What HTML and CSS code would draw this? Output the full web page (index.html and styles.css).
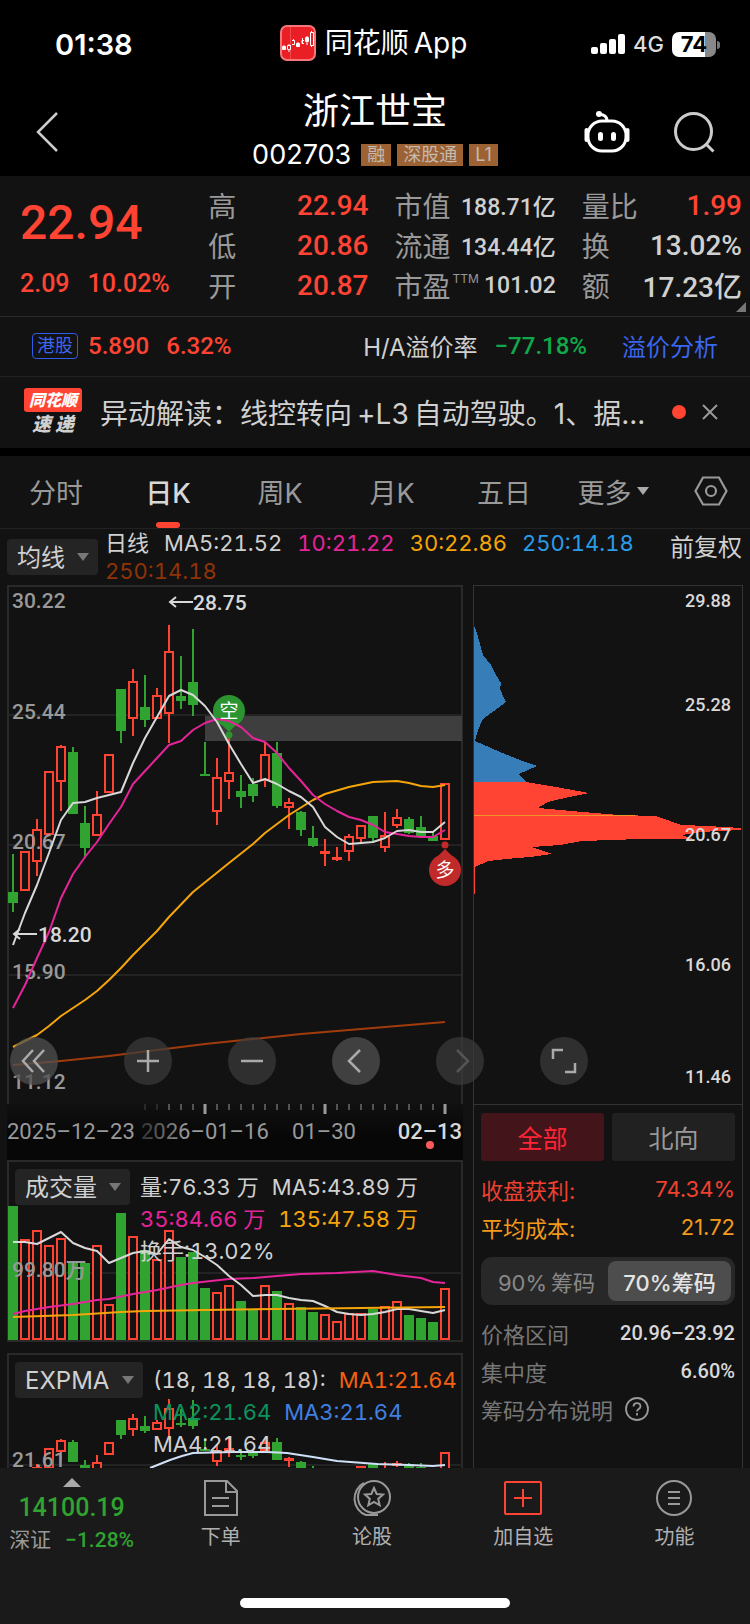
FILE: index.html
```
<!DOCTYPE html>
<html lang="zh-CN">
<head>
<meta charset="utf-8">
<meta name="viewport" content="width=device-width, initial-scale=1">
<title>浙江世宝 002703</title>
<link rel="stylesheet" href="styles.css">
</head>
<body>
<div class="app">
  <div class="status">
    <span class="clock">01:38</span>
    <span class="island">
      <svg class="app-icon" viewBox="0 0 36 36" aria-hidden="true">
        <rect x="1" y="1" width="34" height="34" rx="6" fill="#e91f25" stroke="#f4787a" stroke-width="2"/>
        <path d="M10.500 2v32" stroke="#f0484c" stroke-width="1"/>
        <g stroke="#fff" stroke-width="1" fill="none">
          <path d="M4 20v5M9 19v1M9 25v2M13.500 14v1M18 17v3M22.500 13v5M27 11v9M31.500 6v2M31.500 20v2"/>
          <path d="M2.500 21.500h3v3h-3z M16.500 18.500h3v3h-3z M25.500 12.500h3v4h-3z" fill="#fff"/>
          <path d="M7.500 20.500h3v4h-3z M12 15.500h2.500v4H12 M24 15.500h-2v3h2 M30.500 7.500h3v13h-3z"/>
        </g>
      </svg>
      <span>同花顺&#8201;App</span>
    </span>
    <span class="signals">
      <svg class="bars" viewBox="0 0 34 22" aria-hidden="true" fill="#fff">
        <rect x="0" y="14" width="7" height="7" rx="2"/><rect x="9" y="10" width="7" height="11" rx="2"/>
        <rect x="18" y="6" width="7" height="15" rx="2"/><rect x="27" y="1" width="7" height="20" rx="2"/>
      </svg>
      <span class="net">4G</span>
      <span class="battery"><b>74</b></span>
    </span>
  </div>

  <header class="header">
    <button class="icon-btn back" aria-label="返回">
      <svg width="24" height="42" viewBox="0 0 24 42" fill="none" stroke="#ccc" stroke-width="2.500"><path d="M22 2 3 21 22 40"/></svg>
    </button>
    <div class="heading">
      <h1>浙江世宝</h1>
      <div class="code"><span>002703</span><i class="tag">融</i><i class="tag">深股通</i><i class="tag">L1</i></div>
    </div>
    <div class="actions">
      <button class="icon-btn" aria-label="智能助手">
        <svg width="48" height="44" viewBox="0 0 48 44" fill="none" stroke="#fff" stroke-width="3">
          <rect x="5" y="11" width="38" height="30" rx="14"/>
          <path d="M3.500 20v10M44.500 20v10" stroke-width="4" stroke-linecap="round"/>
          <path d="M24 11c0-5-3-6-8-7"/><circle cx="16" cy="4" r="3" fill="#fff" stroke="none"/>
          <path d="M17.500 24.500v4M30.500 24.500v4" stroke-width="5" stroke-linecap="round"/>
        </svg>
      </button>
      <button class="icon-btn" aria-label="搜索">
        <svg width="42" height="42" viewBox="0 0 42 42" fill="none" stroke="#ccc" stroke-width="3"><circle cx="20.500" cy="20.500" r="18"/><path d="m32.500 32.500 8 8"/></svg>
      </button>
    </div>
  </header>

  <section class="quote">
    <div class="price">
      <strong>22.94</strong>
      <div class="delta"><span>2.09</span><span>10.02%</span></div>
    </div>
    <dl class="stats">
      <div><dt>高</dt><dd class="up">22.94</dd></div>
      <div><dt>低</dt><dd class="up">20.86</dd></div>
      <div><dt>开</dt><dd class="up">20.87</dd></div>
    </dl>
    <dl class="stats small">
      <div><dt>市值</dt><dd>188.71亿</dd></div>
      <div><dt>流通</dt><dd>134.44亿</dd></div>
      <div><dt>市盈<sup>TTM</sup></dt><dd>101.02</dd></div>
    </dl>
    <dl class="stats">
      <div><dt>量比</dt><dd class="up">1.99</dd></div>
      <div><dt>换</dt><dd>13.02%</dd></div>
      <div><dt>额</dt><dd>17.23亿</dd></div>
    </dl>
    <i class="corner"></i>
  </section>

  <section class="hk">
    <span class="hk-tag">港股</span>
    <span class="num up">5.890</span>
    <span class="num up">6.32%</span>
    <span class="ratio">H/A溢价率</span>
    <span class="num down">−77.18%</span>
    <a href="#premium">溢价分析</a>
  </section>

  <section class="news">
    <span class="news-logo"><b>同花顺</b><em>速 递</em></span>
    <a href="#news">异动解读：线控转向&#8201;+L3&#8201;自动驾驶。1、据...</a>
    <i class="dot"></i>
    <button class="icon-btn" aria-label="关闭">
      <svg width="18" height="18" viewBox="0 0 18 18" stroke="#999" stroke-width="2"><path d="m2 2 14 14M16 2 2 16"/></svg>
    </button>
  </section>

  <nav class="tabs">
    <button>分时</button>
    <button class="on">日K</button>
    <button>周K</button>
    <button>月K</button>
    <button>五日</button>
    <button class="more">更多</button>
    <button aria-label="设置">
      <svg width="34" height="30" viewBox="0 0 34 30" fill="none" stroke="#999" stroke-width="2.200"><path d="M9 1.500h16L32.500 15 25 28.500H9L1.500 15z"/><circle cx="17" cy="15" r="5"/></svg>
    </button>
  </nav>

  <div class="ma">
    <label class="pick"><select aria-label="主图指标"><option>均线</option></select></label>
    <div class="legend">
      <span>日线</span><span>MA5:21.52</span><span class="pink">10:21.22</span><span class="gold">30:22.86</span><span class="sky">250:14.18</span><span class="rust">250:14.18</span>
    </div>
    <span class="adjust">前复权</span>
  </div>

  <main class="board">
    <div class="left">
      <div class="kline">
        <svg id="kline" class="plot" viewBox="7 585 456 519" role="img" aria-label="日K线图">
          <g class="grid"><path d="M8 715H462M8 845H462M8 975H462"/></g>
          <g class="frame"><path d="M8 1104V586H462V1104"/></g>
          <rect x="205" y="716" width="257" height="25" fill="#3e3e3e"/>
          <g id="candles"></g>
          <g class="axis"><text x="12" y="608">30.22</text><text x="12" y="719">25.44</text><text x="12" y="849">20.67</text><text x="12" y="979">15.90</text><text x="12" y="1089">11.12</text></g>
          <path class="line" stroke="#a03c0c" d="M13 1065 61 1061 109 1056 157 1050 205 1044 253 1039 301 1034 373 1028 445 1022"/>
          <path class="line" stroke="#f5a50a" d="M13 1047 37 1035 49 1026 61 1016 73 1008 85 1000 97 991 109 980 121 968 133 955 145 943 157 931 169 917 193 892 229 863 253 844 265 833 289 815 313 800 325 794 349 787 373 782 397 781 409 783 421 786 433 787 445 785"/>
          <g fill="#2b932f"><circle cx="229" cy="711" r="16"/><path d="M219 722h20l-10 10z"/><circle cx="229" cy="735" r="3.500"/></g>
          <g fill="#c12a2a"><circle cx="445" cy="870" r="16"/><path d="M436 858h18l-9-9z"/><circle cx="445" cy="845" r="3.500"/></g>
          <path class="line" stroke="#e6249a" d="M13 1008 25 985 37 958 49 932 61 898 73 874 85 857 97 842 109 824 121 807 133 784 145 771 157 758 169 745 181 741 193 730 205 723 217 719 229 721 241 727 253 738 265 742 277 753 289 768 301 781 313 795 325 804 337 811 349 817 361 820 373 825 385 832 397 834 409 836 421 837 433 837 445 830"/>
          <path class="line" stroke="#d8d8d8" d="M13 945 25 913 37 885 49 853 61 820 73 803 85 802 97 798 109 795 121 792 133 763 145 738 157 717 169 696 181 690 193 695 205 706 217 722 229 744 241 764 253 783 265 779 277 784 289 791 301 797 313 807 325 827 337 837 349 844 361 843 373 842 385 838 397 831 409 830 421 832 433 832 445 822"/>
          <g class="badge"><text x="229" y="718">空</text><text x="445" y="877">多</text></g>
          <g class="peak"><path d="M193 602H171M176 597l-6 5 6 5M37 934H15M20 929l-6 5 6 5"/><text x="193" y="610">28.75</text><text x="38" y="942">18.20</text></g>
        </svg>
        <div class="controls">
          <button class="lit first" aria-label="最早"><svg viewBox="0 0 48 48"><path d="M34 13 24 24 34 35M23 13 13 24 23 35"/></svg></button>
          <button aria-label="放大"><svg viewBox="0 0 48 48"><path d="M24 13V35M13 24H35"/></svg></button>
          <button aria-label="缩小"><svg viewBox="0 0 48 48"><path d="M13 24H35"/></svg></button>
          <button class="lit" aria-label="向左"><svg viewBox="0 0 48 48"><path d="M28 13 17 24 28 35"/></svg></button>
          <button class="dim" aria-label="向右"><svg viewBox="0 0 48 48"><path d="M21 13 32 24 21 35"/></svg></button>
          <button aria-label="全屏"><svg viewBox="0 0 48 48"><path d="M13 22V13H23M35 26V35H25"/></svg></button>
        </div>
      </div>

      <svg class="plot timeline" viewBox="7 1104 456 56" role="img" aria-label="日期轴">
        <defs><linearGradient id="fade"><stop offset="0" stop-color="#333"/><stop offset=".35" stop-color="#999"/></linearGradient></defs>
        <g id="ticks"></g>
        <g class="dates"><text x="7" y="1139">2025–12–23</text><text x="141" y="1139" fill="url(#fade)">2026–01–16</text><text x="324" y="1139" text-anchor="middle">01–30</text><text x="462" y="1139" text-anchor="end" class="now">02–13</text></g>
        <circle cx="430" cy="1145" r="4" fill="#ff5a5a"/>
      </svg>

      <section class="panel volume">
        <svg class="plot" viewBox="7 1160 456 182" role="img" aria-label="成交量图">
          <g class="grid"><path d="M8 1273H462"/></g>
          <g id="volumes"></g>
          <g class="axis"><text x="12" y="1277">99.80万</text></g>
          <path id="vol-ma35" class="line" stroke="#e6249a"/>
          <path id="vol-ma5" class="line" stroke="#d8d8d8"/>
          <path id="vol-ma135" class="line" stroke="#f5a50a"/>
        </svg>
        <div class="panel-head">
          <label class="pick"><select aria-label="副图指标一"><option>成交量</option></select></label>
          <div class="legend"><span>量:76.33 万</span><span>MA5:43.89 万</span><span class="pink">35:84.66 万</span><span class="gold">135:47.58 万</span><span>换手:13.02%</span></div>
        </div>
      </section>

      <section class="panel expma">
        <svg class="plot" viewBox="7 1353 456 115" role="img" aria-label="EXPMA图">
          <g class="grid"><path d="M8 1465H462"/></g>
          <g id="mini"></g>
          <g class="axis"><text x="12" y="1467">21.61</text></g>
          <path class="line" stroke="#cfe0f7" d="M150 1468 170 1460 182 1456 193 1453 233 1452 267 1452 287 1453 313 1457 337 1461 377 1464 409 1465 433 1466 445 1465"/>
        </svg>
        <div class="panel-head">
          <label class="pick"><select aria-label="副图指标二"><option>EXPMA</option></select></label>
          <div class="legend"><span>(18, 18, 18, 18):</span><span class="orange">MA1:21.64</span><span class="jade">MA2:21.64</span><span class="blue">MA3:21.64</span><span>MA4:21.64</span></div>
        </div>
      </section>
    </div>

    <aside class="chips">
      <svg class="plot" viewBox="473 585 270 519" role="img" aria-label="筹码分布图">
        <g shape-rendering="crispEdges">
          <path fill="#377db8" d="M474 627 475 627 477 633 483 655 491 665 496 675 501 683 500 689 505 700 506 702 498 708 483 719 478 730 475 741 482 744 500 752 520 760 537 766 519 774 522 778 526 782 474 782z"/>
          <path fill="#ff4433" d="M474 782 526 782 556 787 589 793 569 797 548 802 538 808 571 811 619 815 656 816 670 821 681 825 708 826 741 828 741 830 700 832 682 835 693 839 640 839 582 841 560 845 532 847 546 852 552 854 530 857 506 859 488 861 475 867 475 894 474 894z"/>
          <path fill="#f0942a" d="M474 815h161v1h-161z"/>
        </g>
        <g class="levels"><text x="731" y="607">29.88</text><text x="731" y="711">25.28</text><text x="731" y="841">20.67</text><text x="731" y="971">16.06</text><text x="731" y="1083">11.46</text></g>
      </svg>
      <div class="chip-body">
        <div class="pair"><button class="on">全部</button><button>北向</button></div>
        <div class="row red"><span>收盘获利:</span><span>74.34%</span></div>
        <div class="row amber"><span>平均成本:</span><span>21.72</span></div>
        <div class="segment"><button>90%&#8201;筹码</button><button class="on">70%筹码</button></div>
        <div class="row"><span>价格区间</span><b>20.96–23.92</b></div>
        <div class="row"><span>集中度</span><b>6.60%</b></div>
        <div class="row help"><span>筹码分布说明</span>
          <button class="icon-btn" aria-label="说明"><svg width="24" height="24" viewBox="0 0 24 24" fill="none" stroke="#999" stroke-width="1.800"><circle cx="12" cy="12" r="11"/><path d="M8.500 9.500c0-4.500 7-4.500 7 0 0 2.500-3.500 2.500-3.500 5M12 16v2.500"/></svg></button>
        </div>
      </div>
    </aside>
  </main>

  <footer class="dock">
    <div class="dock-row">
      <a class="index" href="#index"><i></i><strong>14100.19</strong><span><em>深证</em><b>−1.28%</b></span></a>
      <a href="#order"><svg viewBox="0 0 40 40"><path d="M4 3H26L36 13V37H4zM25 3V14H36M11 20H28M11 28H28"/></svg>下单</a>
      <a href="#talk"><svg viewBox="0 0 40 40"><circle cx="22" cy="19" r="16"/><path d="M12 5A17.500 17.500 0 0 0 14 37H26M22 10l2.700 6 6.300.600-4.800 4.300 1.500 6.400-5.700-3.400-5.700 3.400 1.500-6.400-4.800-4.300 6.300-.600z"/></svg>论股</a>
      <a href="#add"><svg viewBox="0 0 40 40" class="hot"><rect x="2" y="4" width="36" height="32" rx="1"/><path d="M20 11V29M11 20H29"/></svg>加自选</a>
      <a href="#menu"><svg viewBox="0 0 40 40"><circle cx="20" cy="20" r="17"/><path d="M14 14H26M14 20H26M14 26H26"/></svg>功能</a>
    </div>
    <div class="home"></div>
  </footer>
</div>
<script src="chart.js"></script>
</body>
</html>
```
FILE: styles.css
```
* { box-sizing: border-box; }
body {
  margin: 0;
  background: #000;
  color: #d0d0d0;
  font-family: Inter, "Noto Sans CJK SC", sans-serif;
  font-size: 22px;
}
button, select { font: inherit; color: inherit; background: none; border: 0; padding: 0; margin: 0; }
a { color: inherit; text-decoration: none; }
i, em { font-style: normal; }
h1, dl, dd { margin: 0; }
svg { display: block; }
.app { min-height: 100vh; display: flex; flex-direction: column; background: #121212; }
.icon-btn { display: flex; }
.up { color: #ff4433; }
.down { color: #0fa84a; }
.pink { color: #e6249a; }
.gold { color: #f5a50a; }
.sky { color: #2a9ce8; }
.rust { color: #8f3208; }
.orange { color: #f26010; }
.jade { color: #0b935e; }
.blue { color: #417fe0; }

/* status bar and title */
.status {
  display: grid;
  grid-template-columns: 1fr auto 1fr;
  align-items: center;
  height: 88px;
  padding: 0 34px 0 35px;
  background: #000;
  color: #fff;
}
.clock { padding-left: 20px; font-size: 29px; font-weight: 600; }
.island { display: flex; align-items: center; gap: 9px; font-size: 28px; line-height: 36px; padding: 0 4px 2px 0; }
.app-icon { width: 36px; height: 36px; }
.signals { display: flex; align-items: center; justify-content: flex-end; gap: 8px; }
.bars { width: 34px; height: 22px; }
.net { font-size: 22px; font-weight: 500; color: #ddd; }
.battery {
  position: relative;
  width: 44px;
  height: 25px;
  border-radius: 7px;
  background: linear-gradient(90deg, #fff 75%, #888 75%);
  color: #000;
  font-size: 22px;
  line-height: 25px;
  text-align: center;
}
.battery::after {
  content: "";
  position: absolute;
  right: -4px;
  top: 9px;
  width: 3px;
  height: 8px;
  border-radius: 0 3px 3px 0;
  background: #777;
}
.header {
  display: grid;
  grid-template-columns: 1fr auto 1fr;
  align-items: center;
  height: 88px;
  padding: 0 35px;
  background: #000;
  color: #fff;
}
.heading { text-align: center; }
h1 { font-size: 36px; font-weight: 400; line-height: 46px; }
.code { display: flex; align-items: center; justify-content: center; gap: 6px; font-size: 27px; line-height: 42px; }
.code span { margin-right: 4px; }
.tag { padding: 0 6px; background: #9c6233; color: #c4bbb2; font-size: 18px; line-height: 22px; }
.actions { display: flex; justify-content: flex-end; align-items: center; gap: 42px; }

/* quote */
.quote {
  position: relative;
  display: grid;
  grid-template-columns: 162fr 160fr 161fr 160fr;
  column-gap: 26px;
  height: 141px;
  padding: 9px 8px 0 20px;
  border-bottom: 1px solid #2a2a2a;
  font-family: Roboto, "Noto Sans CJK SC", sans-serif;
}
.price { color: #ff4433; }
.price strong { display: block; font-size: 48px; font-weight: 500; line-height: 76px; }
.delta { display: flex; gap: 18px; font-size: 25px; font-weight: 500; line-height: 46px; }
.stats div { display: flex; justify-content: space-between; align-items: center; height: 40px; white-space: nowrap; }
.stats dt { color: #999; font-size: 28px; }
.stats dd { font-size: 28px; font-weight: 500; }
.stats.small dd { font-size: 23px; }
.stats sup { font-size: 12px; line-height: 12px; vertical-align: 14px; margin-left: 2px; font-family: Inter, sans-serif; }
.corner {
  position: absolute;
  right: 4px;
  bottom: 4px;
  border-left: 10px solid transparent;
  border-bottom: 10px solid #777;
}
.hk { display: flex; align-items: center; height: 60px; padding: 0 32px 2px; border-bottom: 1px solid #222; }
.hk-tag { padding: 0 4px; border: 1px solid #2f5ce8; border-radius: 4px; color: #3a66f0; font-size: 18px; line-height: 24px; margin-right: 10px; }
.num { font-family: Roboto, sans-serif; font-size: 24px; font-weight: 500; margin-right: 17px; }
.ratio { margin-left: auto; margin-right: 17px; font-size: 24px; }
.hk a { margin-left: 18px; color: #3a66f0; font-size: 24px; }
.news {
  display: flex;
  align-items: center;
  gap: 18px;
  height: 79px;
  padding: 0 31px 1px 24px;
  border-bottom: 8px solid #000;
}
.news a { flex: 1; white-space: nowrap; font-size: 28px; }
.news-logo { width: 58px; font-style: italic; text-align: center; }
.news-logo b {
  display: block;
  border-radius: 3px;
  background: #ff4433;
  color: #fff;
  font-size: 16px;
  font-weight: 900;
  line-height: 24px;
}
.news-logo em { display: block; font-size: 19px; font-weight: 900; font-style: italic; line-height: 25px; }
.dot { width: 14px; height: 14px; border-radius: 50%; background: #ff4433; }
.news .icon-btn { margin-left: -3px; }

/* period tabs */
.tabs {
  display: grid;
  grid-template-columns: repeat(6, 112fr) 78fr;
  height: 73px;
  border-bottom: 1px solid #222;
  color: #999;
  font-size: 27px;
}
.tabs button { position: relative; display: flex; align-items: center; justify-content: center; padding-bottom: 2px; }
.tabs .on { color: #d8d8d8; font-weight: 500; }
.tabs .on::after {
  content: "";
  position: absolute;
  bottom: 0;
  width: 24px;
  height: 6px;
  border-radius: 3px;
  background: #ff4433;
}
.tabs .more { padding-right: 6px; }
.more::after { content: ""; margin-left: 5px; border: 6px solid transparent; border-top: 8px solid #aaa; border-bottom: 0; }

/* indicator legends */
.ma { display: flex; align-items: flex-start; gap: 7px; padding: 0 8px 0 7px; height: 56px; }
.ma .pick { margin-top: 10px; }
.ma .legend { flex: 1; column-gap: 15px; line-height: 28px; }
.adjust { font-size: 24px; line-height: 38px; }
.legend {
  display: flex;
  flex-wrap: wrap;
  column-gap: 13px;
  font-size: 22px;
  font-variant-numeric: tabular-nums;
  line-height: 32px;
  white-space: nowrap;
}
.pick { position: relative; display: block; flex: none; }
.pick select {
  display: block;
  appearance: none;
  height: 36px;
  padding: 0 33px 0 10px;
  border-radius: 4px;
  background: #242424;
  font-size: 24px;
}
.pick::after {
  content: "";
  position: absolute;
  right: 9px;
  top: 14px;
  border: 6px solid transparent;
  border-top: 8px solid #777;
  border-bottom: 0;
  pointer-events: none;
}

/* charts */
.board { flex: 1; display: grid; grid-template-columns: 456fr 270fr; column-gap: 10px; padding: 0 7px; }
.plot { width: 100%; height: auto; font-family: Roboto, "Noto Sans CJK SC", sans-serif; }
.kline { position: relative; }
.grid { stroke: #232323; stroke-width: 2; fill: none; }
.frame { stroke: #2a2a2a; stroke-width: 2; fill: none; }
.axis { fill: #999; font-size: 21px; font-weight: 500; }
.line { fill: none; stroke-width: 2; stroke-linejoin: round; }
.badge { fill: #fff; font-size: 19px; text-anchor: middle; }
.peak text { fill: #d8d8d8; font-size: 21px; font-weight: 500; }
.peak path { stroke: #d8d8d8; stroke-width: 2; fill: none; }
.rise { fill: #121212; stroke: #ff4433; stroke-width: 2; }
.fall { fill: #30a330; stroke: none; }
.wick-rise { stroke: #ff4433; stroke-width: 2; }
.wick-fall { stroke: #30a330; stroke-width: 2; }
.timeline { background: linear-gradient(#101010, #070707 60%); }
.dates { fill: #999; font-size: 22px; }
.dates .now { fill: #d8d8d8; font-weight: 500; }
.levels { fill: #d8d8d8; font-size: 18px; font-weight: 500; text-anchor: end; }
.controls { position: absolute; left: 3px; bottom: 19px; z-index: 2; display: flex; gap: 56px; }
.controls button { width: 48px; height: 48px; border-radius: 50%; background: rgba(60, 60, 60, .7); }
.controls .first { margin-right: 10px; }
.controls .lit { background: rgba(80, 80, 80, .75); }
.controls svg { fill: none; stroke: #aaa; stroke-width: 2.500; }
.controls .dim svg { stroke: #555; }
.panel { position: relative; border: 2px solid #2a2a2a; }
.volume { margin-bottom: 11px; }
.expma { border-bottom: 0; }
.expma .plot { overflow: visible; }
.panel .plot { width: calc(100% + 4px); margin: -2px; }
.panel-head { position: absolute; left: 6px; right: 0; top: 7px; display: flex; align-items: flex-start; gap: 10px; }
.panel-head .legend { padding-top: 2px; }

/* chip distribution */
.chips { border: 1px solid #333; border-bottom: 0; }
.chips .plot { width: calc(100% + 2px); margin: -1px; border-bottom: 1px solid #333; }
.chip-body { padding: 9px 7px; display: grid; }
.pair { display: grid; grid-template-columns: 1fr 1fr; gap: 8px; margin-bottom: 9px; }
.pair button { height: 48px; border-radius: 3px; background: #212121; color: #999; font-size: 25px; }
.pair .on { background: #43141a; color: #ff2436; }
.row { display: flex; justify-content: space-between; align-items: center; height: 38px; color: #777; font-size: 22px; }
.row b { color: #d8d8d8; font-family: Roboto, sans-serif; font-size: 20px; font-weight: 500; }
.row.red { color: #f04030; }
.row.amber { color: #f39a1b; }
.segment { display: grid; grid-template-columns: 1fr 1fr; margin: 11px 0 9px; padding: 4px; border-radius: 11px; background: #282828; color: #888; }
.segment button { height: 40px; border-radius: 8px; font-size: 22px; white-space: nowrap; }
.segment .on { background: #4d4d4d; color: #e4e4e4; font-weight: 500; }
.help { justify-content: flex-start; gap: 12px; }

/* bottom dock */
.dock { position: relative; z-index: 3; height: 156px; background: #1a1a1a; display: flex; flex-direction: column; justify-content: space-between; padding: 10px 0 16px; }
.dock-row { display: grid; grid-template-columns: 145fr repeat(4, 151fr); }
.dock-row a { display: flex; flex-direction: column; align-items: center; gap: 5px; color: #b0b0b0; font-size: 20px; line-height: 28px; }
.dock-row svg { width: 40px; height: 40px; fill: none; stroke: #999; stroke-width: 2; }
.dock-row svg.hot { stroke: #ff4433; }
.dock-row .index { gap: 0; padding-right: 2px; font-family: Roboto, "Noto Sans CJK SC", sans-serif; color: #30a330; line-height: 24px; }
.index i { border: 9px solid transparent; border-top: 0; border-bottom: 9px solid #aaa; }
.index strong { font-size: 25px; font-weight: 500; line-height: 41px; }
.index span { display: flex; gap: 14px; font-size: 21px; }
.index em { color: #999; }
.index b { font-weight: 500; }
.home { width: 36%; height: 10px; margin: 0 auto; border-radius: 5px; background: #fff; }
```
FILE: chart.js
```
// Each bar: [direction, high, body top, body bottom, low, volume top]; 1 = rise, 0 = fall.
const bars = [
  [0, 854, 892, 903, 912, 1206], [1, 851, 851, 891, 891, 1239], [1, 819, 829, 862, 876, 1230],
  [1, 771, 771, 835, 835, 1245], [1, 745, 746, 782, 811, 1238], [0, 747, 752, 814, 814, 1261],
  [0, 806, 823, 848, 858, 1263], [1, 791, 814, 836, 836, 1245], [1, 754, 754, 793, 793, 1304],
  [0, 689, 689, 731, 743, 1213], [1, 669, 681, 719, 736, 1236], [0, 675, 707, 720, 727, 1250],
  [1, 688, 695, 719, 719, 1259], [1, 625, 651, 714, 743, 1230], [0, 656, 696, 701, 709, 1257],
  [0, 629, 682, 705, 716, 1252], [0, 742, 774, 776, 776, 1288], [1, 758, 777, 812, 825, 1292],
  [1, 737, 772, 782, 799, 1285], [0, 775, 791, 797, 808, 1301], [0, 778, 784, 796, 802, 1309],
  [1, 742, 754, 781, 787, 1285], [0, 742, 753, 806, 808, 1291], [1, 798, 802, 808, 829, 1303],
  [0, 811, 812, 830, 836, 1307], [0, 826, 838, 846, 847, 1312], [1, 839, 851, 854, 866, 1314],
  [1, 847, 857, 859, 861, 1321], [1, 834, 836, 852, 861, 1313], [1, 825, 825, 839, 843, 1313],
  [0, 816, 816, 838, 843, 1309], [1, 812, 835, 848, 852, 1306], [1, 809, 817, 826, 828, 1301],
  [0, 817, 819, 833, 834, 1315], [0, 816, 827, 837, 837, 1318], [0, 832, 836, 841, 841, 1322],
  [1, 783, 783, 840, 840, 1288]
];

const xOf = i => 13 + i * 12;

function body(x, top, bottom, rise) {
  if (!rise) return `<rect class="fall" x="${x - 5}" y="${top}" width="10" height="${Math.max(2, bottom - top)}"/>`;
  return `<rect class="rise" x="${x - 4}" y="${top + 1}" width="8" height="${Math.max(1, bottom - top - 2)}"/>`;
}

function candles(mapY) {
  return bars.map(([rise, high, top, bottom, low], i) => {
    const [h, t, b, l] = [high, top, bottom, low].map(mapY);
    const wick = `<path class="wick-${rise ? 'rise' : 'fall'}" d="M${xOf(i)} ${h}V${l}"/>`;
    return wick + body(xOf(i), t, b, rise);
  }).join('');
}

document.getElementById('candles').innerHTML = candles(y => y);
document.getElementById('mini').innerHTML = candles(y => Math.round(1399 + (y - 625) * 0.335));
document.getElementById('volumes').innerHTML = bars.map((bar, i) => body(xOf(i), bar[5], 1340, bar[0])).join('');

const path = points => 'M' + points.map(([i, y]) => `${xOf(i)} ${y}`).join(' ');
const ma5 = [1242, 1242, 1244, 1238, 1232, 1243, 1248, 1251, 1263, 1258, 1253, 1251, 1254, 1239, 1247, 1250, 1257, 1265,
  1276, 1285, 1296, 1295, 1295, 1298, 1300, 1301, 1306, 1312, 1314, 1315, 1314, 1312, 1309, 1309, 1311, 1313, 1310];
const ma35 = [[0, 1314], [1, 1311], [3, 1307], [5, 1304], [7, 1300], [8, 1299], [10, 1294], [12, 1290], [14, 1285],
  [15, 1283], [18, 1279], [20, 1278], [22, 1276], [24, 1274], [27, 1273], [30, 1271], [32, 1275], [34, 1278], [35, 1282], [36, 1283]];
const ma135 = [[0, 1317], [5, 1315], [9, 1312], [11, 1311], [16, 1310], [22, 1309], [36, 1307]];
document.getElementById('vol-ma5').setAttribute('d', path(ma5.map((y, i) => [i, y])));
document.getElementById('vol-ma35').setAttribute('d', path(ma35));
document.getElementById('vol-ma135').setAttribute('d', path(ma135));

let ticks = '';
for (let x = 145; x <= 445; x += 12) {
  const major = (x - 205) % 120 === 0;
  ticks += `<path d="M${x} 1104v${major ? 10 : 6}" stroke="${x < 160 ? '#444' : '#999'}" stroke-width="${major ? 3 : 1}"/>`;
}
document.getElementById('ticks').innerHTML = ticks;
```
